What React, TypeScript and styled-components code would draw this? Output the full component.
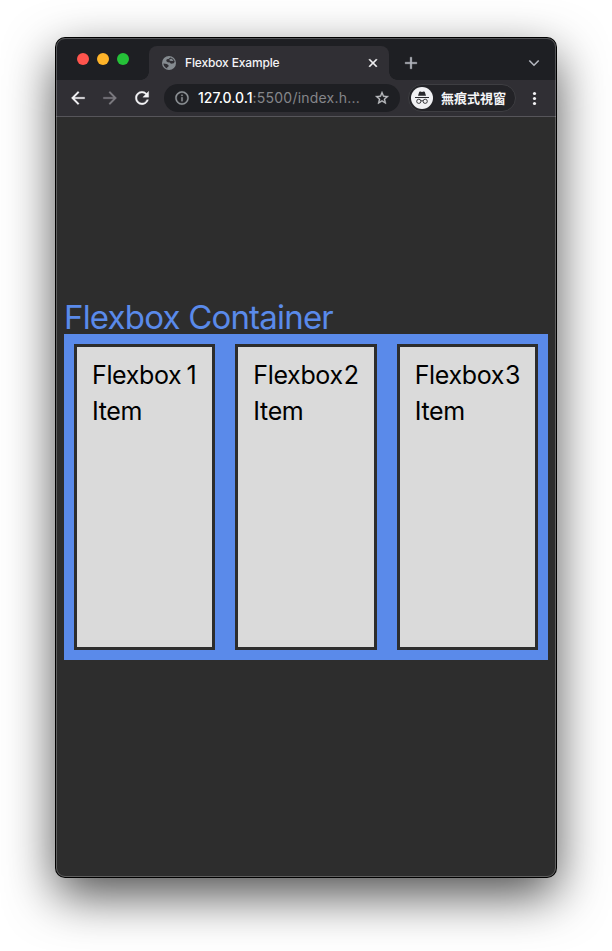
import React from "react";
import styled, { createGlobalStyle } from "styled-components";

const GlobalStyle = createGlobalStyle`
  * { box-sizing: border-box; }
  body { margin: 0; background: #fff; font-family: Inter, "Noto Sans CJK TC", sans-serif; }
`;

const Desktop = styled.main`
  width: 612px;
  height: 951px;
  padding: 38px 56px 0;
  overflow: hidden;
`;

const Window = styled.div`
  position: relative;
  width: 500px;
  height: 839px;
  display: flex;
  flex-direction: column;
  border-radius: 9px;
  background: #2d2d2d;
  box-shadow: 0 0 0 1px #000, 0 18px 50px rgba(0, 0, 0, 0.7);

  &::after {
    content: "";
    position: absolute;
    inset: 0;
    border: 1px solid rgba(255, 255, 255, 0.24);
    border-radius: 9px;
    pointer-events: none;
  }
`;

const TabStrip = styled.header`
  height: 42px;
  flex: none;
  display: flex;
  align-items: flex-end;
  padding-left: 21px;
  background: #1e1f23;
  border-radius: 9px 9px 0 0;
`;

const Lights = styled.div`
  display: flex;
  gap: 8px;
  width: 72px;
  align-self: flex-start;
  padding-top: 15px;
`;

const Light = styled.span<{ $color: string }>`
  width: 12px;
  height: 12px;
  border-radius: 50%;
  background: ${(p) => p.$color};
`;

const Tab = styled.div`
  position: relative;
  width: 240px;
  height: 34px;
  display: flex;
  align-items: center;
  padding: 0 9px 0 12px;
  border-radius: 8px 8px 0 0;
  background: #302f34;

  &::before,
  &::after {
    content: "";
    position: absolute;
    bottom: 0;
    width: 8px;
    height: 8px;
  }
  &::before {
    left: -8px;
    background: radial-gradient(circle at 0 0, transparent 7.5px, #302f34 8px);
  }
  &::after {
    right: -8px;
    background: radial-gradient(circle at 100% 0, transparent 7.5px, #302f34 8px);
  }
`;

const TabTitle = styled.span`
  flex: 1;
  margin-left: 8px;
  padding-bottom: 1px;
  font-size: 12px;
  font-weight: 500;
  letter-spacing: -0.15px;
  color: #f4f4f6;
`;

const StripActions = styled.div`
  flex: 1;
  height: 34px;
  display: flex;
  align-items: center;
  justify-content: space-between;
  padding: 0 14px 0 12px;
`;

const Toolbar = styled.nav`
  height: 37px;
  flex: none;
  display: flex;
  align-items: center;
  padding: 0 13px 0 12px;
  background: #302f34;
  border-bottom: 1px solid #56555a;
`;

const NavButtons = styled.div`
  display: flex;
  gap: 12px;
  width: 96px;
`;

const AddressBar = styled.div`
  width: 236px;
  height: 28px;
  display: flex;
  align-items: center;
  padding: 0 10px 0 10px;
  border-radius: 14px;
  background: #1e1f23;
`;

const Url = styled.span`
  flex: 1;
  margin-left: 8px;
  padding-bottom: 1px;
  font-size: 14px;
  letter-spacing: 0.22px;
  white-space: nowrap;
  color: #85868a;
`;

const Host = styled.span`
  color: #fff;
  font-weight: 500;
  letter-spacing: 0;
`;

const Incognito = styled.div`
  width: 108px;
  height: 28px;
  margin-left: 8px;
  display: flex;
  align-items: center;
  gap: 8px;
  padding-left: 2px;
  border: 1px solid #3e3e42;
  border-radius: 14px;
  background: #232327;
`;

const IncognitoLabel = styled.span`
  padding-bottom: 2px;
  color: #f4f4f6;
  font: 700 13px "Noto Sans CJK TC", sans-serif;
  white-space: nowrap;
`;

const MenuSlot = styled.div`
  margin-left: auto;
  display: flex;
`;

const Page = styled.section`
  flex: 1;
  display: flex;
  flex-direction: column;
  padding: 178px 8px 0;
`;

const Heading = styled.h1`
  height: 39px;
  margin: 0;
  font-size: 33px;
  font-weight: 400;
  letter-spacing: -0.8px;
  line-height: 44px;
  white-space: nowrap;
  color: #5a8aea;
`;

const Container = styled.div`
  height: 326px;
  display: flex;
  gap: 20px;
  padding: 10px;
  background: #5a8aea;
`;

const Item = styled.div`
  flex: 1 1 0;
  min-width: 0;
  padding: 10px 0 0 15px;
  border: 3px solid #2d2d2d;
  background: #dadada;
  color: #000;
  font-size: 25px;
  letter-spacing: -0.35px;
  line-height: 36px;
`;

const ItemLine = styled.div`
  white-space: nowrap;
`;

const Digit = styled.span<{ $shift: number }>`
  margin-left: ${(p) => p.$shift}px;
`;

const Icon = ({ d, size, color, weight = 0 }: { d: string; size: number; color: string; weight?: number }) => (
  <svg width={size} height={size} viewBox="0 0 24 24" fill={color} stroke={color} strokeWidth={weight}>
    <path d={d} />
  </svg>
);

const paths = {
  back: "M20 11H7.83l5.59-5.59L12 4l-8 8 8 8 1.41-1.41L7.83 13H20v-2z",
  forward: "M12 4l-1.41 1.41L16.17 11H4v2h12.17l-5.58 5.59L12 20l8-8z",
  reload:
    "M17.65 6.35A7.958 7.958 0 0 0 12 4c-4.42 0-7.99 3.58-7.99 8s3.57 8 7.99 8c3.73 0 6.84-2.55 7.73-6h-2.08A5.99 5.99 0 0 1 12 18c-3.31 0-6-2.69-6-6s2.69-6 6-6c1.66 0 3.14.69 4.22 1.78L13 11h7V4l-2.35 2.35z",
  info: "M11 7h2v2h-2zm0 4h2v6h-2zm1-9C6.48 2 2 6.48 2 12s4.48 10 10 10 10-4.48 10-10S17.52 2 12 2zm0 18c-4.41 0-8-3.59-8-8s3.59-8 8-8 8 3.59 8 8-3.59 8-8 8z",
  star: "M22 9.24l-7.19-.62L12 2 9.19 8.63 2 9.24l5.46 4.73L5.82 21 12 17.27 18.18 21l-1.63-7.03L22 9.24zM12 15.4l-3.76 2.27 1-4.28-3.32-2.88 4.38-.38L12 6.1l1.71 4.04 4.38.38-3.32 2.88 1 4.28L12 15.4z",
  plus: "M19 13h-6v6h-2v-6H5v-2h6V5h2v6h6v2z",
  close: "M19 6.41L17.59 5 12 10.59 6.41 5 5 6.41 10.59 12 5 17.59 6.41 19 12 13.41 17.59 19 19 17.59 13.41 12z",
};

const Globe = () => (
  <svg width="16" height="16" viewBox="0 0 16 16">
    <circle cx="8" cy="8" r="7" fill="#858b90" />
    <path
      d="M9.2 2.4 7.6 3.9 5.8 4.2 5.2 6.1l1.5 1.2 2.2.1 1 1.4 2.9-.5.9-1.6A5.7 5.7 0 0 0 9.2 2.4zM2.4 8.6l3.5.3 1.7 1.3-.1 1.4-1.4.9.2 1A5.7 5.7 0 0 1 2.4 8.6z"
      fill="#302f34"
    />
    <path d="M10.4 3.6 8.3 4.5l.5 1.3 2.2.3 1.6-.3z" fill="#858b90" />
  </svg>
);

const IncognitoAvatar = () => (
  <svg width="22" height="22" viewBox="0 0 22 22">
    <circle cx="11" cy="11" r="11" fill="#f1f1f3" />
    <path d="M7 8.8 8.2 5q.3-.8 1.1-.5l1.7.5 1.7-.5q.8-.3 1.1.5L15 8.8z" fill="#29292d" />
    <path d="M4 10.5h14" stroke="#29292d" strokeWidth="1" />
    <g fill="none" stroke="#29292d" strokeWidth="0.9">
      <circle cx="7.8" cy="14.3" r="2.1" />
      <circle cx="14.2" cy="14.3" r="2.1" />
      <path d="M9.9 14q1.1-.7 2.2 0" />
    </g>
  </svg>
);

const items = [
  { digit: "1", shift: 5 },
  { digit: "2", shift: 1 },
  { digit: "3", shift: 1 },
];

export default function App() {
  return (
    <>
      <GlobalStyle />
      <Desktop>
        <Window>
          <TabStrip>
            <Lights>
              <Light $color="#ff544d" />
              <Light $color="#ffb429" />
              <Light $color="#25c138" />
            </Lights>
            <Tab>
              <Globe />
              <TabTitle>Flexbox Example</TabTitle>
              <Icon d={paths.close} size={14} color="#f4f4f6" weight={0.9} />
            </Tab>
            <StripActions>
              <Icon d={paths.plus} size={20} color="#b5b8c0" weight={0.4} />
              <svg width="16" height="16" viewBox="0 0 16 16" fill="none" stroke="#b5b8c0" strokeWidth="1.6">
                <path d="M3.3 5.5 8 10.2l4.7-4.7" />
              </svg>
            </StripActions>
          </TabStrip>
          <Toolbar>
            <NavButtons>
              <Icon d={paths.back} size={20} color="#f4f4f6" weight={0.3} />
              <Icon d={paths.forward} size={20} color="#7c7b80" weight={0.3} />
              <Icon d={paths.reload} size={20} color="#f4f4f6" weight={0.4} />
            </NavButtons>
            <AddressBar>
              <Icon d={paths.info} size={16} color="#8f9498" weight={0.4} />
              <Url>
                <Host>127.0.0.1</Host>:5500/index.h...
              </Url>
              <Icon d={paths.star} size={16} color="#c0c1c5" weight={0.5} />
            </AddressBar>
            <Incognito>
              <IncognitoAvatar />
              <IncognitoLabel>無痕式視窗</IncognitoLabel>
            </Incognito>
            <MenuSlot>
              <svg width="16" height="16" viewBox="0 0 16 16" fill="#f4f4f6">
                <circle cx="7.5" cy="3.5" r="1.6" />
                <circle cx="7.5" cy="8.5" r="1.6" />
                <circle cx="7.5" cy="13.5" r="1.6" />
              </svg>
            </MenuSlot>
          </Toolbar>
          <Page>
            <Heading>Flexbox Container</Heading>
            <Container>
              {items.map((item) => (
                <Item key={item.digit}>
                  <ItemLine>
                    Flexbox<Digit $shift={item.shift}>{item.digit}</Digit>
                  </ItemLine>
                  <ItemLine>Item</ItemLine>
                </Item>
              ))}
            </Container>
          </Page>
        </Window>
      </Desktop>
    </>
  );
}
